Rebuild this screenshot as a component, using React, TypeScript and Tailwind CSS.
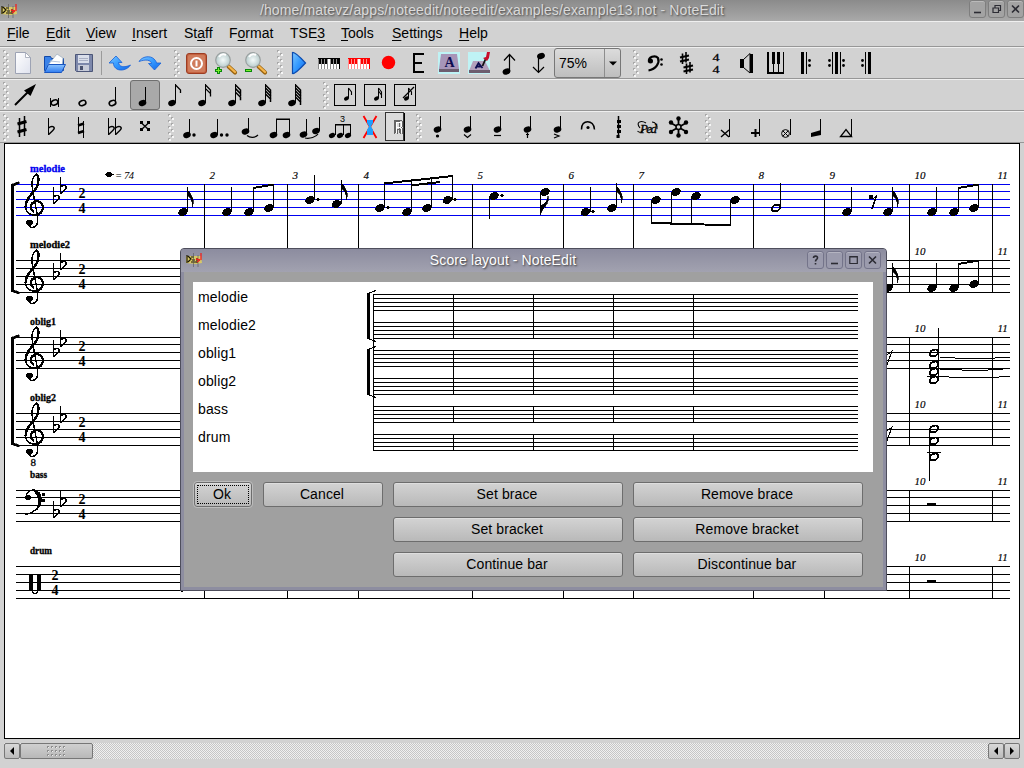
import type { ReactNode } from "react";

type P = { x: number; y: number };

/* ---------- shared notation glyphs ---------- */

const Head = ({ x, y, r = 4.4, open = false }: P & { r?: number; open?: boolean }) => (
  <ellipse
    cx={x}
    cy={y}
    rx={open ? r - 0.5 : r}
    ry={open ? r * 0.62 : r * 0.76}
    transform={`rotate(-22 ${x} ${y})`}
    fill={open ? "none" : "#000"}
    stroke={open ? "#000" : "none"}
    strokeWidth={open ? (r > 4.5 ? 1.9 : 1.6) : 0}
  />
);

const V = ({ x, a, b, w = 1 }: { x: number; a: number; b: number; w?: number }) => (
  <rect x={x} y={a} width={w} height={b - a} />
);
const H = ({ y, a, b, h = 1 }: { y: number; a: number; b: number; h?: number }) => (
  <rect x={a} y={y} width={b - a} height={h} />
);

const FlatSign = ({ x, y }: P) => (
  <g>
    <V x={x} a={y - 11} b={y + 6} />
    <path d={`M${x + 0.5} ${y - 1}C${x + 4} ${y - 4} ${x + 7} ${y - 2} ${x + 6} ${y}C${x + 5} ${y + 2} ${x + 2} ${y + 4} ${x + 0.5} ${y + 5.5}`} fill="none" stroke="#000" strokeWidth="1.5" />
  </g>
);

const SharpSign = ({ x, y, s = 1 }: P & { s?: number }) => (
  <g transform={`translate(${x} ${y}) scale(${s})`}>
    <path d="M-2.5 -9V10M2.5 -11V9" stroke="#000" strokeWidth="1.5" />
    <path d="M-4.5 -3L4.5 -5.5M-4.5 5L4.5 2.5" stroke="#000" strokeWidth="3" />
  </g>
);

/* ---------- toolbar pieces ---------- */

const Handle = ({ left = 0, right = 0 }: { left?: number; right?: number }) => (
  <svg width="7" height="28" viewBox="0 0 7 28" className="shrink-0" style={{ marginLeft: left, marginRight: right }} shapeRendering="crispEdges">
    {[0, 1, 2, 3, 4, 5, 6, 7, 8].map((i) => (
      <g key={i}>
        <rect x={i % 2 ? 3 : 0} y={1 + i * 3} width="2" height="2" fill="#a8a8a8" />
        <rect x={i % 2 ? 4 : 1} y={2 + i * 3} width="2" height="2" fill="#f6f6f6" />
      </g>
    ))}
  </svg>
);

const Tool = ({ x, row, w = 30, down = false, children }: { x: number; row: number; w?: number; down?: boolean; children: ReactNode }) => (
  <button className={`relative h-[30px] shrink-0 ${down ? "rounded-[3px] border border-[#6f6f6f] bg-[#a9a9a9]" : ""}`} style={{ width: w }}>
    <svg width={w} height="30" viewBox={`${x} ${row + 1} ${w} 30`} className={`block overflow-visible ${down ? "-m-px" : ""}`}>
      {children}
    </svg>
  </button>
);

const ToolRow = ({ children }: { children: ReactNode }) => (
  <div className="flex h-8 shrink-0 items-center border-t border-b border-t-[#efefef] border-b-[#979797] bg-[#d2d2d2]">{children}</div>
);

const Keys = ({ x, color }: { x: number; color: string }) => (
  <g shapeRendering="crispEdges">
    <rect x={x} y={58} width={22} height={11} fill="#fff" />
    <rect x={x} y={58} width={22} height={1} fill={color} />
    {[0, 1, 2, 3, 4, 5, 6, 7].map((i) => (
      <g key={i} fill={color}>
        <rect x={x + i * 3} y={59} width={1} height={10} opacity={0.45} />
        {i !== 3 && i !== 7 && <rect x={x + i * 3 + 1} y={59} width={2} height={5} />}
      </g>
    ))}
    <rect x={x + 21} y={58} width={1} height={11} fill={color} />
  </g>
);

const Magnifier = ({ x, plus }: { x: number; plus: boolean }) => (
  <g>
    <path d={`M${x + 13.5} 66.5l6.5 6`} stroke="#9a6410" strokeWidth="4.2" strokeLinecap="round" />
    <path d={`M${x + 14} 66.5l6 5.5`} stroke="#f5b44a" strokeWidth="2.2" strokeLinecap="round" />
    <circle cx={x + 8} cy={60} r="7.3" fill="url(#lens)" stroke="#9aa0a0" strokeWidth="1.2" />
    <path d={`M${x + 4} 57c2-3 5-3 7-2`} stroke="#fff" strokeWidth="2" fill="none" />
    {plus ? (
      <path d={`M${x + 3.5} 67v7M${x} 70.5h7`} stroke="#0a8a0a" strokeWidth="3" />
    ) : (
      <path d={`M${x} 70.5h7`} stroke="#0a8a0a" strokeWidth="3" />
    )}
    <path d={plus ? `M${x + 3.5} 68v5M${x + 1} 70.5h5` : `M${x + 1} 70.5h5`} stroke="#7bf02c" strokeWidth="1" />
  </g>
);

const fileTools = (
  <>
    <Tool x={9} row={47}>
      <path d="M15.500 52.500h10l5 5v16h-15z" fill="url(#paper)" stroke="#9da3b4" />
      <path d="M25.500 52.500v5h5z" fill="#fff" stroke="#9da3b4" strokeWidth=".8" />
    </Tool>
    <Tool x={39} row={47}>
      <path d="M44.500 56.500h6l1 2h12v12h-19z" fill="#3a82e8" stroke="#1248a8" />
      <path d="M48 65l9-11 6 4-1 9z" fill="#fff" stroke="#9ab" strokeWidth=".7" />
      <path d="M50 61l10 1" stroke="#b8c6dc" />
      <path d="M48.500 64.500h17l-4 8h-17z" fill="url(#folder)" stroke="#1a56c0" />
    </Tool>
    <Tool x={70} row={47}>
      <path d="M76.500 54.500h17v17h-16l-1-1z" fill="#7d88ab" stroke="#4c5678" />
      <rect x="79" y="55" width="11" height="8" fill="#d9deea" />
      <path d="M80 58.500h9M80 60.500h9" stroke="#a9b0c4" />
      <rect x="79" y="65" width="11" height="6" fill="#c7cbd8" />
      <rect x="81" y="66" width="3" height="4" fill="#49516d" />
    </Tool>
  </>
);

const Row1 = () => (
  <ToolRow>
    <Handle left={3} right={-1} />
    {fileTools}
    <div className="ml-[2px] mr-[3px] h-6 w-px shrink-0 bg-[#9b9b9b]" />
    <Tool x={106} row={47}>
      <path d="M110 63L117 56L123 62.500H119.500C120 67 125 68 131.500 65C128 70.500 120 71.500 116.500 68C115 66.500 114.500 65 114.500 63z" fill="url(#blue)" stroke="#1560d8" strokeWidth=".8" />
    </Tool>
    <Tool x={136} row={47}>
      <path d="M162 63L155.500 70L149.500 63.500H152.500C152 60 147 59 140 61.500C143 56.500 151 55 155 59C156.500 60.500 157.500 62 157.500 63z" fill="url(#blue)" stroke="#1560d8" strokeWidth=".8" />
    </Tool>
    <Handle left={9} />
    <Tool x={182} row={47}>
      <rect x="187.500" y="53.500" width="20" height="20" rx="2.500" fill="#c4613f" stroke="#9c3c22" />
      <rect x="189" y="55" width="17" height="17" rx="1.500" fill="#d07c5c" />
      <circle cx="197.500" cy="63.500" r="5.500" fill="none" stroke="#fff" strokeWidth="2" />
      <path d="M197.500 60.500v6" stroke="#fff" strokeWidth="2" />
    </Tool>
    <Tool x={212} row={47}><Magnifier x={216} plus /></Tool>
    <Tool x={242} row={47}><Magnifier x={246} plus={false} /></Tool>
    <Handle left={6} />
    <Tool x={285} row={47}>
      <path d="M293.500 52.500C295 52 300 56 306.500 63C300 70 295 74 293.500 73.500z" fill="url(#blue)" stroke="#0b4bb0" strokeWidth="1.200" />
    </Tool>
    <Tool x={315} row={47}><Keys x={319} color="#000" /></Tool>
    <Tool x={345} row={47}><Keys x={349} color="#f00" /></Tool>
    <Tool x={375} row={47}><circle cx="389.500" cy="62.500" r="6.700" fill="#f00" /></Tool>
    <Tool x={405} row={47}>
      <path d="M425 54H415V72H425M415 63H423" fill="none" stroke="#000" strokeWidth="2" />
    </Tool>
    <Tool x={435} row={47}>
      <rect x="439" y="52" width="22" height="22" fill="#bff3f5" />
      <path d="M442 54h16l2 15h-20z" fill="#a795b8" />
      <path d="M440 69h20v3h-20z" fill="#6d5e6f" />
      <text x="450.500" y="66.500" textAnchor="middle" fontFamily="Liberation Serif" fontWeight="bold" fontSize="14" fill="#0c0c50">A</text>
    </Tool>
    <Tool x={465} row={47}>
      <rect x="469" y="52" width="22" height="22" fill="#bff3f5" />
      <path d="M474 61h12l5 10h-21z" fill="#b3a0bc" />
      <path d="M470 70h21v3h-21z" fill="#6d5e6f" />
      <path d="M476.500 68.500L479.500 63L483.500 68M478 66.500h4" stroke="#0c0c50" strokeWidth="1.800" fill="none" />
      <path d="M483.500 66L487 58" stroke="#111" strokeWidth="1.800" />
      <path d="M484 58l3-1 1-5h3l-1 6-2 3z" fill="#c8102c" />
    </Tool>
    <Tool x={495} row={47}>
      <Head x={507.500} y={71.500} r={4} />
      <path d="M510.500 71V54.500M505 60.500L510.500 54.500L516 60.500" fill="none" stroke="#000" strokeWidth="1.200" />
    </Tool>
    <Tool x={525} row={47}>
      <Head x={542} y={56} r={4} />
      <path d="M539.500 56V72.500M534 67L539.500 72.500L545 67" fill="none" stroke="#000" strokeWidth="1.200" />
    </Tool>
    <div className="flex h-[30px] w-[67px] shrink-0 rounded-[3px] border border-[#777] bg-linear-to-b from-[#dcdcdc] to-[#bebebe]">
      <div className="w-[50px] border-r border-[#8d8d8d] pl-[4px] font-['Liberation_Sans',sans-serif] text-[14px] leading-[28px]">75%</div>
      <svg width="15" height="28" viewBox="0 0 15 28"><path d="M4 12.500h8l-4 4z" /></svg>
    </div>
    <Handle left={12} />
    <Tool x={641} row={47}>
      <path d="M650 62C649 57 656 54.500 659 58C661 63 657 69 649.500 70.500" fill="none" stroke="#000" strokeWidth="2.200" />
      <circle cx="651.500" cy="61" r="2.500" />
      <circle cx="662.500" cy="59.500" r="1.300" /><circle cx="662.500" cy="64.500" r="1.300" />
    </Tool>
    <Tool x={671} row={47}>
      <path d="M683.500 53.500V64M687 52V62.500M687.500 63.500V74M691 62V72.500" stroke="#000" strokeWidth="1.600" />
      <path d="M681 57.500L690 55.500M681 61.500L690 59.500M684.500 67.500L694 65.500M684.500 71.500L694 69.500" stroke="#000" strokeWidth="2" />
    </Tool>
    <Tool x={701} row={47}>
      <g fontFamily="Liberation Serif" fontSize="11" textAnchor="middle" stroke="#000" strokeWidth=".3"><text x="717" y="61" textLength="7" lengthAdjust="spacingAndGlyphs">4</text><text x="717" y="73" textLength="7" lengthAdjust="spacingAndGlyphs">4</text></g>
    </Tool>
    <Tool x={731} row={47}>
      <rect x="741" y="59" width="4" height="9" />
      <path d="M744.500 59.500L751 53.500V73L744.500 67.500" fill="none" stroke="#000" />
      <V x={751} a={54} b={73} w={3} />
    </Tool>
    <Tool x={761} row={47}>
      <g shapeRendering="crispEdges">
        <V x={768} a={52} b={74} w={2} /><V x={773} a={52} b={64} w={3} /><V x={778} a={52} b={64} w={3} /><V x={774} a={64} b={73} /><V x={779} a={64} b={73} /><V x={784} a={52} b={74} /><H y={72} a={768} b={785} h={2} />
      </g>
    </Tool>
    <Tool x={791} row={47}>
      <g shapeRendering="crispEdges"><V x={802} a={52} b={74} w={3} /><V x={807} a={52} b={74} /></g>
      <circle cx="810.500" cy="60.500" r="1.400" /><circle cx="810.500" cy="65.500" r="1.400" />
    </Tool>
    <Tool x={821} row={47}>
      <g shapeRendering="crispEdges"><V x={833} a={52} b={74} /><V x={836} a={52} b={74} w={3} /><V x={841} a={52} b={74} /></g>
      <circle cx="830.500" cy="60.500" r="1.400" /><circle cx="830.500" cy="65.500" r="1.400" /><circle cx="844.500" cy="60.500" r="1.400" /><circle cx="844.500" cy="65.500" r="1.400" />
    </Tool>
    <Tool x={851} row={47}>
      <g shapeRendering="crispEdges"><V x={866} a={52} b={74} /><V x={869} a={52} b={74} w={3} /></g>
      <circle cx="863.500" cy="60.500" r="1.400" /><circle cx="863.500" cy="65.500" r="1.400" />
    </Tool>
  </ToolRow>
);

const ShortNote = ({ x, flags }: { x: number; flags: number }) => (
  <g>
    <Head x={x - 3} y={103} r={3.9} />
    <V x={x} a={84} b={103} />
    {Array.from({ length: flags }, (_, i) => (
      <path key={i} d={`M${x + 0.5} ${85 + i * (flags > 3 ? 3 : 3.6)}l5 5v3`} fill="none" stroke="#000" strokeWidth={flags > 2 ? 1.5 : 1.3} />
    ))}
  </g>
);

const GraceBox = ({ x, flags, slash }: { x: number; flags: number; slash?: boolean }) => (
  <g>
    <rect x={x + 0.5} y={84.5} width="21" height="21" fill="none" stroke="#000" />
    <Head x={x + 12.5} y={98.500} r={2.600} />
    <V x={x + 14} a={88} b={98} />
    {Array.from({ length: flags }, (_, i) => (
      <path key={i} d={`M${x + 14.5} ${88 + i * 3}l3 4v3`} fill="none" stroke="#000" strokeWidth="1.1" />
    ))}
    {slash && <path d={`M${x + 9} 98L${x + 20} 87`} stroke="#000" strokeWidth="1.3" />}
  </g>
);

const Row2 = () => (
  <ToolRow>
    <Handle left={3} />
    <Tool x={10} row={79}><path d="M15 105L30 90" stroke="#000" strokeWidth="2" /><path d="M36 84L24 90.500L30.500 96z" /></Tool>
    <Tool x={40} row={79}><Head x={54.500} y={102.500} r={4} open /><V x={50} a={98} b={107} /><V x={58} a={98} b={107} /></Tool>
    <Tool x={70} row={79}><Head x={82.500} y={103} r={4} open /></Tool>
    <Tool x={100} row={79}><Head x={112.500} y={103} r={3.900} open /><V x={115} a={87} b={103} /></Tool>
    <Tool x={130} row={79} down><Head x={142.500} y={103} r={3.900} /><V x={145} a={87} b={103} /></Tool>
    <Tool x={160} row={79}><ShortNote x={175} flags={1} /></Tool>
    <Tool x={190} row={79}><ShortNote x={205} flags={2} /></Tool>
    <Tool x={220} row={79}><ShortNote x={235} flags={3} /></Tool>
    <Tool x={250} row={79}><ShortNote x={265} flags={4} /></Tool>
    <Tool x={280} row={79}><ShortNote x={295} flags={5} /></Tool>
    <Handle left={13} />
    <Tool x={330} row={79}><GraceBox x={334} flags={1} /></Tool>
    <Tool x={360} row={79}><GraceBox x={364} flags={2} /></Tool>
    <Tool x={390} row={79}><GraceBox x={394} flags={1} slash /></Tool>
  </ToolRow>
);

const Artic = ({ x, children }: { x: number; children?: ReactNode }) => (
  <Tool x={x} row={111}>
    <Head x={x + 14.5} y={129.500} r={3.900} />
    <V x={x + 17} a={116} b={130} />
    <g fill="none" stroke="#000" strokeWidth="1.2">{children}</g>
  </Tool>
);

const Row3 = () => (
  <ToolRow>
    <Handle left={3} />
    <Tool x={10} row={111}><SharpSign x={22} y={127} /></Tool>
    <Tool x={40} row={111}><FlatSign x={48} y={129} /></Tool>
    <Tool x={70} row={111}>
      <V x={78} a={117} b={133} /><V x={83} a={121} b={138} /><path d="M78 125.500L84 123.500M78 133L84 131" stroke="#000" strokeWidth="2.500" />
    </Tool>
    <Tool x={100} row={111}><FlatSign x={108} y={129} /><FlatSign x={115} y={129} /></Tool>
    <Tool x={130} row={111}>
      <path d="M141 122.500L149 130M149 122.500L141 130" stroke="#000" strokeWidth="1.300" />
      <path d="M140 121h3v3h-3zM147 121h3v3h-3zM140 128h3v3h-3zM147 128h3v3h-3z" />
    </Tool>
    <Handle left={8} />
    <Tool x={175} row={111}><Head x={187} y={135} r={3.900} /><V x={189} a={119} b={135} /><circle cx="194" cy="135" r="1.700" /></Tool>
    <Tool x={205} row={111}><Head x={214} y={135} r={3.900} /><V x={217} a={119} b={135} /><circle cx="221.500" cy="135" r="1.700" /><circle cx="227" cy="135" r="1.700" /></Tool>
    <Tool x={235} row={111}><Head x={245.500} y={131.500} r={3.900} /><V x={248} a={118} b={132} /><path d="M247 135.500C250 138 255 138 258 135" fill="none" stroke="#000" strokeWidth="1.200" /></Tool>
    <Tool x={265} row={111}><Head x={273.500} y={135} r={3.900} /><Head x={286.500} y={135} r={3.900} /><V x={276} a={119} b={135} /><V x={289} a={119} b={135} /><H y={118.500} a={276} b={290} h={1.500} /></Tool>
    <Tool x={295} row={111}><Head x={303.500} y={134.500} r={3.900} /><Head x={316} y={131} r={3.900} /><V x={306} a={119} b={134} /><V x={319} a={117} b={131} /><path d="M305 138C310 139 316 137 318 134" fill="none" stroke="#000" strokeWidth="1.200" /></Tool>
    <Tool x={325} row={111}>
      <Head x={332} y={135.500} r={3.200} /><Head x={340} y={135.500} r={3.200} /><Head x={348} y={135.500} r={3.200} />
      <V x={335} a={124} b={135} /><V x={343} a={124} b={135} /><V x={350} a={124} b={135} /><H y={124} a={335} b={351} h={1.500} />
      <text x="342.500" y="122" fontSize="9" fontFamily="Liberation Sans" textAnchor="middle">3</text>
    </Tool>
    <Tool x={355} row={111}>
      <path d="M363.500 116L376.500 138M376.500 116L363.500 138" stroke="#f00" strokeWidth="1.800" />
      <path d="M367 120h6v3l-2 3.500l2 3.500v5h-6v-5l2-3.500l-2-3.500z" fill="#1ea0ff" />
    </Tool>
    <Tool x={385} row={111} w={21}>
      <g shapeRendering="crispEdges">
        <rect x="385.500" y="112.500" width="18" height="28" fill="#dcdcdc" stroke="#333" />
        <V x={404} a={113} b={141} w={1} />
        <path d="M396.500 133V121.500H400.500V127H396.500M400.500 127V133" transform="translate(-1 0)" fill="none" stroke="#666" />
        <path d="M396.500 133V122.500H401.500V127.500H396.500M401.500 127.500V133" fill="none" stroke="#fff" />
        <path d="M397.500 134V129.500H400.500V134M394.500 133.500V120.500H401.500L402.500 121.500V126.500L401.500 127.500L402.500 128.500V134" fill="none" stroke="#666" />
      </g>
    </Tool>
    <Handle left={10} />
    <Artic x={423}><circle cx="437.500" cy="136" r="1" fill="#000" /></Artic>
    <Artic x={453}><path d="M464 134.500l3.500 3l3.500-3" /></Artic>
    <Artic x={483}><path d="M494 135.500h7" /></Artic>
    <Artic x={513}><path d="M527.500 133v5M526 134.500h3" /></Artic>
    <Artic x={543}><path d="M554 134l5 2l-5 2" /></Artic>
    <Tool x={573} row={111}><path d="M581.500 129.500C581 119 594 119 594.500 129.500" fill="none" stroke="#000" strokeWidth="1.500" /><circle cx="588" cy="127.500" r="1.600" /></Tool>
    <Tool x={603} row={111}><path d="M618.500 116V138" stroke="#000" strokeWidth="1.500" /><path d="M617 120h4v3h-4zM617 125h4v3h-4zM617 130h4v3h-4zM616.500 135h3v3h-3z" /></Tool>
    <Tool x={633} row={111}>
      <text x="640" y="132.500" fontFamily="Liberation Serif" fontStyle="italic" fontSize="13" textLength="17" stroke="#000" strokeWidth=".3">Ped</text>
      <path d="M640 128C635 122 641 120 646 123M637.500 131C640 134 643 131 644 129M652 122C655 122 658 125 657 129" fill="none" stroke="#000" strokeWidth="1.100" />
    </Tool>
    <Tool x={663} row={111}>
      <g stroke="#000" strokeWidth="1.800"><path d="M678.500 119V135M671 123L686 131.500M686 123L671 131.500" /></g>
      <circle cx="678.500" cy="127" r="2.500" fill="#d2d2d2" stroke="#000" strokeWidth="1.500" />
      {[[678.5, 118.500], [678.5, 135.500], [671, 122.500], [686, 122.500], [671, 132], [686, 132]].map(([a, b]) => <circle key={`${a}-${b}`} cx={a} cy={b} r="2.200" />)}
    </Tool>
    <Handle left={12} />
    <Tool x={712} row={111}><V x={729} a={119} b={137} /><path d="M721 130l8 7M729 130l-8 7" stroke="#000" strokeWidth="1.400" /></Tool>
    <Tool x={742} row={111}><V x={759} a={119} b={136} /><path d="M751 133h8M755.500 129v8" stroke="#000" strokeWidth="2" /></Tool>
    <Tool x={772} row={111}><V x={790} a={119} b={135} /><circle cx="785.500" cy="133.500" r="3.900" fill="none" stroke="#000" /><path d="M783 131l5 5M788 131l-5 5" stroke="#000" /></Tool>
    <Tool x={802} row={111}><V x={820} a={119} b={135} /><path d="M811 133l10-3v5l-10 2z" /></Tool>
    <Tool x={832} row={111}><V x={851} a={119} b={137} /><path d="M840.500 136.500h11L846 129.500z" fill="none" stroke="#000" strokeWidth="1.300" /></Tool>
  </ToolRow>
);

/* ---------- score ---------- */

const STAVES = [
  { name: "melodie", w: 35, ys: [184, 191, 199, 207, 215], nameY: 171.5, clef: "g" },
  { name: "melodie2", w: 40, ys: [260, 268, 276, 284, 292], nameY: 247.5, clef: "g" },
  { name: "oblig1", w: 26, ys: [337, 344, 352, 360, 368], nameY: 324.5, clef: "g" },
  { name: "oblig2", w: 26, ys: [413, 421, 429, 437, 445], nameY: 400.5, clef: "g" },
  { name: "bass", w: 17, ys: [490, 497, 505, 513, 521], nameY: 477.5, clef: "f" },
  { name: "drum", w: 22, ys: [566, 574, 582, 590, 598], nameY: 553.5, clef: "d" },
];
const BARS = [204, 287, 358, 472, 563, 633, 753, 824, 909, 992];

const Treble = ({ y }: { y: number }) => (
  <g transform={`translate(0 ${y - 184})`} fill="none" stroke="#000">
    <path d="M36 174C39.500 176 39.500 184 35 190C29 197 25.500 201 25.500 207" strokeWidth="2.400" />
    <path d="M25.500 207C26 213 31 216 37 215" strokeWidth="1.400" />
    <path d="M37 215C43 213 44.500 207 41 203C37 199 31 202 31 207C31 209.500 32 211 34 212" strokeWidth="2.200" />
    <path d="M36 174C31 178 31.500 186 33 192L37.500 216V222C37 227 33 228.500 29 226.500" strokeWidth="1.400" />
    <circle cx="29.500" cy="222.800" r="3.200" fill="#000" stroke="none" />
  </g>
);

const BassClef = () => (
  <g>
    <path d="M26 497C26 491 33 489 36 490.500" fill="none" stroke="#000" strokeWidth="1.200" />
    <path d="M34 490.500C43 492 43 503 37 509C40 502 39 495 34 490.500z" stroke="#000" strokeWidth="1.500" />
    <path d="M38 507C35 511 31 513.500 25 514.500" fill="none" stroke="#000" strokeWidth="1.300" />
    <circle cx="28" cy="497.500" r="2.800" />
    <rect x="42" y="493" width="3" height="3" /><rect x="42" y="499" width="3" height="3" />
  </g>
);

type N = { x: number; y: number; top?: number; bot?: number; flag?: boolean; dot?: number; open?: boolean };
const NOTES: N[] = [
  { x: 183, y: 212, top: 187, flag: true },
  { x: 227, y: 212, top: 187 },
  { x: 249, y: 212, top: 187 },
  { x: 269, y: 208, top: 184 },
  { x: 310, y: 200, top: 175, dot: 318 },
  { x: 336.500, y: 204, top: 180, flag: true },
  { x: 380, y: 208, top: 183, dot: 388 },
  { x: 407, y: 212, top: 180 },
  { x: 427, y: 208, top: 178 },
  { x: 447.500, y: 200, top: 176, dot: 455 },
  { x: 494, y: 196, bot: 219, dot: 502 },
  { x: 545, y: 192, bot: 214, flag: true },
  { x: 585.500, y: 212, top: 187, dot: 593 },
  { x: 612, y: 208, top: 183, flag: true },
  { x: 656, y: 200, bot: 223 },
  { x: 676, y: 192, bot: 224 },
  { x: 696, y: 196, bot: 225 },
  { x: 735, y: 200, bot: 225 },
  { x: 776, y: 208, top: 183, open: true },
];
const TAIL: N[] = [
  { x: 847, y: 212, top: 187 },
  { x: 888, y: 212, top: 187, flag: true },
  { x: 932, y: 212, top: 187 },
  { x: 954, y: 212, top: 187 },
  { x: 974, y: 208, top: 184 },
];

const ScoreNote = ({ x, y, top, bot, flag, dot, open }: N) => {
  const up = Math.round(x + 4);
  const dn = Math.round(x - 5);
  return (
    <g>
      <Head x={x} y={y} r={4.900} open={open} />
      {top !== undefined && <V x={up} a={top} b={y} />}
      {bot !== undefined && <V x={dn} a={y} b={bot} />}
      {flag && top !== undefined && <path d={`M${up} ${top}C${up + 2} ${top + 7} ${up + 9} ${top + 11} ${up + 5} ${top + 20}C${up + 6} ${top + 13} ${up + 3} ${top + 10} ${up} ${top + 8}z`} stroke="#000" strokeWidth=".7" />}
      {flag && bot !== undefined && <path d={`M${dn} ${bot + 1}C${dn + 3} ${bot - 7} ${dn + 10} ${bot - 10} ${dn + 8} ${bot - 18}C${dn + 7} ${bot - 11} ${dn + 3} ${bot - 9} ${dn} ${bot - 8}z`} stroke="#000" strokeWidth=".7" />}
      {dot !== undefined && <circle cx={dot} cy={y - 0.7} r="1.7" />}
    </g>
  );
};

const EighthRest = ({ y }: { y: number }) => (
  <g><circle cx="871" cy={y} r="2.200" /><path d={`M869.500 ${y + 1}C872 ${y + 3} 875 ${y + 1} 876.500 ${y - 1.5}L872 ${y + 12}`} fill="none" stroke="#000" strokeWidth="1.300" /></g>
);

const Bracket = ({ a, b }: { a: number; b: number }) => (
  <g><V x={11} a={a} b={b} w={3} /><path d={`M11 ${a + 0.5}L19 ${a - 2.5}v2L14 ${a + 2}zM11 ${b - 0.5}L19 ${b + 2}v-2L14 ${b - 2}z`} stroke="#000" strokeWidth=".5" /></g>
);

const Score = () => (
  <svg width="1014" height="594" viewBox="5 144 1014 594" className="block" shapeRendering="crispEdges">
    {STAVES.map((s, i) => {
      const drum = s.clef === "d";
      const [t, , , , b] = s.ys;
      return (
        <g key={s.name}>
          {s.ys.map((y) => <rect key={y} x={16} y={y} width={994} height={1} fill={i === 0 ? "#0000f0" : "#000"} />)}
          <text x={30} y={s.nameY} textLength={s.w} lengthAdjust="spacingAndGlyphs" fontFamily="Liberation Serif" fontWeight="bold" fontSize="10.500" fill={i === 0 ? "#0000f0" : "#000"} stroke={i === 0 ? "#0000f0" : "#000"} strokeWidth=".3">{s.name}</text>
          {BARS.map((x, k) => (
            <g key={x}>
              <V x={x} a={t} b={i === 0 || i === 2 ? s.ys[4] + 46 : b + 1} />
              {(i === 0 || k > 7) && <text x={x + 5.500} y={t - 5} fontFamily="Liberation Serif" fontStyle="italic" fontSize="11" stroke="#000" strokeWidth=".15">{k + 2}</text>}
            </g>
          ))}
          {s.clef === "g" && <Treble y={t} />}
          {!drum && <><FlatSign x={53} y={t + (s.clef === "f" ? 22 : 14)} /><FlatSign x={60} y={t + (s.clef === "f" ? 11 : 4)} /></>}
          <g fontFamily="Liberation Serif" fontWeight="bold" fontSize="14" textAnchor="middle">
            <text x={drum ? 55 : 82} y={t + 14}>2</text><text x={drum ? 55 : 82} y={t + 29}>4</text>
          </g>
        </g>
      );
    })}
    <BassClef />
    <V x={29} a={574} b={590} w={4} /><V x={37} a={574} b={590} w={4} /><path d="M32 590C33 595 37 595 38 590" fill="none" stroke="#000" />
    <text x="30.500" y="465.500" fontFamily="Liberation Serif" fontSize="11" stroke="#000" strokeWidth=".3">8</text>
    <Bracket a={184} b={292} /><Bracket a={337} b={445} />
    <ellipse cx="109" cy="174.500" rx="3" ry="2.500" /><path d="M105 174.500h9" stroke="#000" />
    <text x="115" y="178.500" fontFamily="Liberation Serif" fontStyle="italic" fontSize="10.500" textLength="19">= 74</text>
    {NOTES.map((n) => <ScoreNote key={n.x} {...n} />)}
    {TAIL.map((n) => <ScoreNote key={n.x} {...n} />)}
    <g transform="translate(0 76)">{TAIL.map((n) => <ScoreNote key={n.x} {...n} />)}<path d="M958 188L979 184.500" stroke="#000" strokeWidth="2" /></g>
    <g fill="none" stroke="#000" strokeWidth="2">
      <path d="M253 188L274 184.500M384 183.500L453 176M411 185.500L440 182M651 223H671V224H691L731 225.500M958 188L979 184.500" />
    </g>
    <EighthRest y={197} />
    <path d="M887 355l5-4l-5 14M887 431l5-4l-5 14" fill="none" stroke="#000" />
    {[353, 365, 372, 380].map((y) => <Head key={y} x={934} y={y} r={5} open />)}
    <V x={938} a={328} b={380} /><H y={376} a={927} b={941} />
    <path d="M940 357l22 1.500h26l22-1.500M940 369l22 1h26l22-1.500M940 376l14 1.500h40l16-1.500" fill="none" stroke="#000" />
    {[429, 441, 457].map((y) => <Head key={y} x={934} y={y} r={5} open />)}
    <V x={929} a={430} b={481} /><H y={452} a={927} b={941} />
    <H y={503} a={927} b={936} h={2} /><H y={580} a={927} b={936} h={2} />
    <H y={590} a={181} b={183} h={2} />
  </svg>
);

/* ---------- dialog ---------- */

const AppIcon = () => (
  <svg width="16" height="16" viewBox="0 0 16 16" className="shrink-0">
    <path d="M0 4h15l1 7-6 1-10-1z" fill="#d8c866" />
    <path d="M1 3v8M2 4l3 3-3 3M5 5h3M6 8h3M5 10h5M11 6v5" stroke="#1a1608" strokeWidth="1.200" fill="none" />
    <path d="M7.500 1v14M12 3v12" stroke="#555" strokeWidth=".6" />
    <path d="M10 7l4 1M15 1v7M11 10l3-2" stroke="#f02020" strokeWidth="1.300" fill="none" />
  </svg>
);

const WinButton = ({ kind, grey }: { kind: "help" | "min" | "max" | "restore" | "close"; grey?: boolean }) => (
  <button className={`flex h-[18px] w-[17px] shrink-0 items-center justify-center rounded-[3px] border ${grey ? "border-[#7e7e7e] bg-[#a3a3a3]" : "border-[#74748a] bg-[#9b9bad]"} shadow-[inset_0_1px_0_rgba(255,255,255,0.25)]`}>
    <svg width="11" height="12" viewBox="0 0 11 12" fill="none" stroke="#2c2c34" strokeWidth="1.600">
      {kind === "help" && <path d="M3.500 4C3.500 1.500 8 1.500 7.500 4C7.300 5.500 5.500 5.500 5.500 7.500M5.500 9v1.500" />}
      {kind === "min" && <path d="M2 9.500h7" />}
      {kind === "max" && <path d="M1.800 2.500h7.500v7h-7.500zM1.500 3h8" strokeWidth="1.200" />}
      {kind === "restore" && <path d="M2 5h5.500v4.500H2zM4 5V2.500h5.500v5H7.500" strokeWidth="1.200" />}
      {kind === "close" && <path d="M2 2.500l7 7M9 2.500l-7 7" />}
    </svg>
  </button>
);

const PushButton = ({ label, focus }: { label: string; focus?: boolean }) => (
  <button className={`block h-[25px] w-full rounded-[3px] border border-[#6d6d6d] bg-linear-to-b from-[#d3d3d3] to-[#b9b9b9] pr-[2px] text-[14px] leading-[22px] tracking-[0.1px] shadow-[inset_0_1px_0_#dedede] ${focus ? "outline outline-1 outline-[#bdbdbd]" : "pb-[1px]"}`}>
    {focus ? <span className="ml-[2px] block h-[19px] border border-dotted border-black pr-[2px] leading-[16px]">{label}</span> : label}
  </button>
);

const PARTS = ["melodie", "melodie2", "oblig1", "oblig2", "bass", "drum"];

const Dialog = () => (
  <section className="absolute left-[180px] top-[248px] flex h-[343px] w-[707px] flex-col rounded-t-[4px] border border-[#4e4e5c] bg-[#8d8da0] px-[3px] pb-[3px]">
    <header className="-mx-[3px] flex h-[23px] shrink-0 items-center rounded-t-[3px] bg-linear-to-b from-[#8c8c9f] to-[#a2a2b0] pl-[5px] pr-[5px] pb-[1px]">
      <AppIcon />
      <h2 className="flex-1 pr-[3px] text-center text-[14px] leading-[22px] tracking-[0.1px] text-white [text-shadow:1px_1px_2px_#333]">Score layout - NoteEdit</h2>
      <div className="flex gap-[2px]">
        <WinButton kind="help" /><WinButton kind="min" /><WinButton kind="max" /><WinButton kind="close" />
      </div>
    </header>
    <div className="flex-1 bg-[#a0a0a0] pl-[9px] pr-[10px] pt-[10px]">
      <div className="flex h-[190px] w-[680px] bg-white">
        <ul className="w-[174px] pl-[5px] pt-[1px] text-[14px] tracking-[0.15px]">
          {PARTS.map((p) => <li key={p} className="h-7 leading-[29px]">{p}</li>)}
        </ul>
        <svg width="506" height="190" viewBox="367 282 506 190" shapeRendering="crispEdges">
          {[294, 322, 350, 378, 406, 434].map((t) => [0, 4, 8, 12, 16].map((d) => <H key={t + d} y={t + d} a={373} b={858} />))}
          <V x={373} a={294} b={451} />
          {[453, 533, 613, 693].map((x) => <g key={x}><V x={x} a={294} b={339} /><V x={x} a={350} b={395} /><V x={x} a={406} b={423} /><V x={x} a={434} b={451} /></g>)}
          {[293, 349].map((y) => <g key={y}><V x={367} a={y} b={y + 46} w={3} /><path d={`M368 ${y + 0.5}L376 ${y - 2.5}M368 ${y + 45.5}L376 ${y + 48.5}`} stroke="#000" strokeWidth="1.200" /></g>)}
        </svg>
      </div>
      <div className="mt-[10px] grid grid-cols-[60px_120px_230px_230px] gap-[10px]">
        <div className="px-[1px]"><PushButton label="Ok" focus /></div>
        <PushButton label="Cancel" />
        <PushButton label="Set brace" />
        <PushButton label="Remove brace" />
        <div className="col-start-3"><PushButton label="Set bracket" /></div>
        <PushButton label="Remove bracket" />
        <div className="col-start-3"><PushButton label="Continue bar" /></div>
        <PushButton label="Discontinue bar" />
      </div>
    </div>
  </section>
);

/* ---------- window ---------- */

const MENUS: [string, string, string, number][] = [
  ["", "F", "ile", 39], ["", "E", "dit", 40], ["", "V", "iew", 46], ["", "I", "nsert", 52], ["St", "a", "ff", 45],
  ["F", "o", "rmat", 61], ["TSE", "3", "", 51], ["", "T", "ools", 51], ["", "S", "ettings", 67], ["", "H", "elp", 40],
];

const ScrollArrow = ({ right }: { right?: boolean }) => (
  <button className="flex h-4 w-4 shrink-0 items-center justify-center rounded-[2px] border border-[#777] bg-linear-to-b from-[#d8d8d8] to-[#bcbcbc]">
    <svg width="6" height="8" viewBox="0 0 6 8"><path d={right ? "M1 0l4 4-4 4z" : "M5 0L1 4l4 4z"} /></svg>
  </button>
);

export default function App() {
  return (
    <div className="relative flex h-[768px] w-[1024px] flex-col overflow-hidden bg-[#d2d2d2] font-['Liberation_Sans',Arial,sans-serif] text-black">
      <svg width="0" height="0" className="absolute">
        <defs>
          <linearGradient id="blue" x1="0" y1="0" x2="1" y2="1"><stop offset="0" stopColor="#7cc6ff" /><stop offset=".5" stopColor="#3399ff" /><stop offset="1" stopColor="#1466e8" /></linearGradient>
          <linearGradient id="paper" x1="0" y1="0" x2="1" y2="1"><stop offset="0" stopColor="#fff" /><stop offset="1" stopColor="#dfe2ee" /></linearGradient>
          <linearGradient id="folder" x1="0" y1="0" x2="0" y2="1"><stop offset="0" stopColor="#8cc4ff" /><stop offset="1" stopColor="#2f7cf0" /></linearGradient>
          <radialGradient id="lens"><stop offset="0" stopColor="#f4fafa" /><stop offset="1" stopColor="#b9cccc" /></radialGradient>
        </defs>
      </svg>
      <header className="flex h-[21px] shrink-0 items-center bg-linear-to-b from-[#8b8b8b] to-[#a9a9a9] pl-px">
        <AppIcon />
        <h1 className="flex-1 pr-[4px] pl-[2px] text-center text-[14px] leading-[19px] tracking-[0.13px] text-[#dadada] [text-shadow:1px_1px_2px_#444]">/home/matevz/apps/noteedit/noteedit/examples/example13.not - NoteEdit</h1>
        <div className="flex gap-[2px] pb-[3px]"><WinButton kind="min" grey /><WinButton kind="restore" grey /><WinButton kind="close" grey /></div>
      </header>
      <nav className="flex h-[26px] shrink-0 border-t border-b border-t-[#efefef] border-b-[#979797] pl-[7px] text-[14px] leading-[23px]">
        {MENUS.map(([a, u, b, w]) => <span key={a + u + b} className="shrink-0" style={{ width: w }}>{a}<span className="underline underline-offset-2">{u}</span>{b}</span>)}
      </nav>
      <Row1 />
      <Row2 />
      <Row3 />
      <main className="mx-1 h-[596px] w-[1016px] shrink-0 border border-black bg-white"><Score /></main>
      <div className="mx-1 mt-[4px] flex h-4 w-[1016px] shrink-0 bg-[repeating-conic-gradient(#c6c6c6_0_25%,#f0f0f0_0_50%)] bg-[length:2px_2px]">
        <ScrollArrow />
        <div className="flex h-4 w-[73px] items-center justify-center rounded-[2px] border border-[#777] bg-linear-to-b from-[#d0d0d0] to-[#b8b8b8]">
          <svg width="19" height="11" viewBox="0 0 19 11" shapeRendering="crispEdges">
            {[0, 4, 8].map((y) => [0, 4, 8, 12, 16].map((x) => <g key={`${x}-${y}`}><rect x={x} y={y} width="2" height="2" fill="#8e8e8e" /><rect x={x + 1} y={y + 1} width="1" height="1" fill="#eee" /></g>))}
          </svg>
        </div>
        <div className="flex-1" />
        <ScrollArrow /><ScrollArrow right />
      </div>
      <Dialog />
    </div>
  );
}
